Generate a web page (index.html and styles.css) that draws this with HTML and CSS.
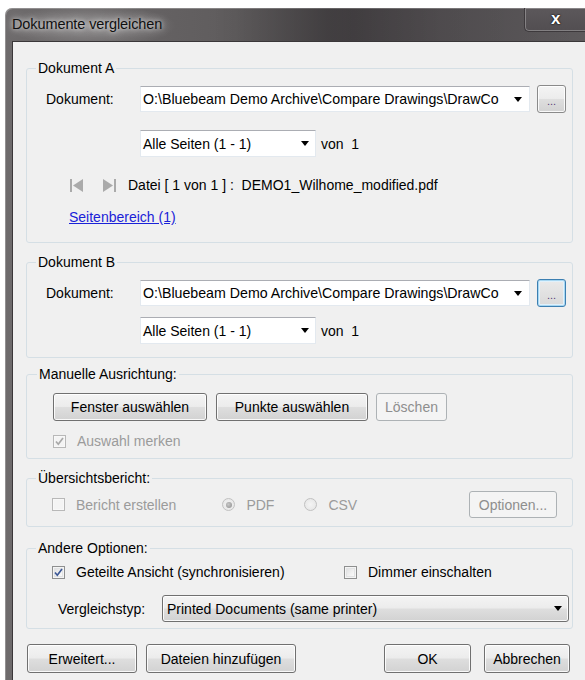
FILE: index.html
```html
<!DOCTYPE html>
<html lang="de">
<head>
<meta charset="utf-8">
<title>Dokumente vergleichen</title>
<link rel="stylesheet" href="styles.css">
</head>
<body>
<div class="window">
  <div class="titlebar">
    <span class="title">Dokumente vergleichen</span>
    <span class="close">x</span>
  </div>
  <div class="client">

    <fieldset class="group group-a">
      <legend>Dokument A</legend>
      <div class="row doc-row">
        <span class="lbl">Dokument:</span>
        <div class="combo combo-path">
          <span class="combo-text">O:\Bluebeam Demo Archive\Compare Drawings\DrawCo</span>
          <span class="arrow"></span>
        </div>
        <span class="btn browse">...</span>
      </div>
      <div class="row page-row">
        <div class="combo combo-pages">
          <span class="combo-text">Alle Seiten (1 - 1)</span>
          <span class="arrow"></span>
        </div>
        <span class="von">von&nbsp; 1</span>
      </div>
      <div class="row nav-row">
        <svg class="nav-icon" width="14" height="13" viewBox="0 0 14 13"><rect x="0" y="0" width="2" height="13"/><polygon points="13,0 3,6.5 13,13"/></svg>
        <svg class="nav-icon nav-last" width="14" height="13" viewBox="0 0 14 13"><polygon points="1,0 11,6.5 1,13"/><rect x="12" y="0" width="2" height="13"/></svg>
        <span class="file-info">Datei [ 1 von 1 ] :&nbsp; DEMO1_Wilhome_modified.pdf</span>
      </div>
      <div class="row link-row">
        <a class="link" href="#">Seitenbereich (1)</a>
      </div>
    </fieldset>

    <fieldset class="group group-b">
      <legend>Dokument B</legend>
      <div class="row doc-row">
        <span class="lbl">Dokument:</span>
        <div class="combo combo-path">
          <span class="combo-text">O:\Bluebeam Demo Archive\Compare Drawings\DrawCo</span>
          <span class="arrow"></span>
        </div>
        <span class="btn browse browse-hot">...</span>
      </div>
      <div class="row page-row page-row-b">
        <div class="combo combo-pages">
          <span class="combo-text">Alle Seiten (1 - 1)</span>
          <span class="arrow"></span>
        </div>
        <span class="von">von&nbsp; 1</span>
      </div>
    </fieldset>

    <fieldset class="group group-manual">
      <legend>Manuelle Ausrichtung:</legend>
      <div class="row btn-row">
        <span class="btn btn-window">Fenster auswählen</span>
        <span class="btn btn-points">Punkte auswählen</span>
        <span class="btn btn-disabled btn-clear">Löschen</span>
      </div>
      <div class="row check-row remember-row">
        <span class="check check-disabled checked">
          <svg width="11" height="11" viewBox="0 0 11 11"><path d="M2 5.5 L4.3 8.2 L9 2"/></svg>
        </span>
        <span class="check-label disabled">Auswahl merken</span>
      </div>
    </fieldset>

    <fieldset class="group group-report">
      <legend>Übersichtsbericht:</legend>
      <div class="row report-row">
        <span class="check check-disabled"></span>
        <span class="check-label disabled">Bericht erstellen</span>
        <span class="radio radio-disabled radio-on radio-pdf"></span>
        <span class="check-label disabled">PDF</span>
        <span class="radio radio-disabled radio-csv"></span>
        <span class="check-label disabled">CSV</span>
        <span class="btn btn-disabled btn-options">Optionen...</span>
      </div>
    </fieldset>

    <fieldset class="group group-other">
      <legend>Andere Optionen:</legend>
      <div class="row check-row other-checks">
        <span class="check checked">
          <svg width="11" height="11" viewBox="0 0 11 11"><path d="M2 5.5 L4.3 8.2 L9 2"/></svg>
        </span>
        <span class="check-label split-label">Geteilte Ansicht (synchronisieren)</span>
        <span class="check"></span>
        <span class="check-label">Dimmer einschalten</span>
      </div>
      <div class="row type-row">
        <span class="lbl type-lbl">Vergleichstyp:</span>
        <div class="select-btn">
          <span class="combo-text">Printed Documents (same printer)</span>
          <span class="arrow"></span>
        </div>
      </div>
    </fieldset>

    <div class="footer">
      <span class="btn btn-advanced">Erweitert...</span>
      <span class="btn btn-add">Dateien hinzufügen</span>
      <span class="footer-spacer"></span>
      <span class="btn btn-ok">OK</span>
      <span class="btn btn-cancel">Abbrechen</span>
    </div>

  </div>
</div>
</body>
</html>
```

FILE: styles.css
```css
html, body {
  margin: 0;
  padding: 0;
  background: #ffffff;
  overflow: hidden;
  height: 680px;
}

body {
  font-family: "Liberation Sans", Arial, sans-serif;
  font-size: 14px;
  color: #000;
}

/* ---------- window frame ---------- */
.window {
  margin: 8px 0 0 5px;
  width: 580px;
  height: 672px;
  border-radius: 7px 0 0 0;
  background: linear-gradient(90deg, #6e6b6c 0%, #5f5c5d 40%, #4c484b 60%, #5d5a5c 100%);
  box-shadow: inset 1px 1px 0 rgba(255, 255, 255, 0.25);
  padding-left: 7px;
  box-sizing: border-box;
  display: flex;
  flex-direction: column;
  overflow: hidden;
}

.titlebar {
  height: 33px;
  flex: none;
  display: flex;
  align-items: flex-start;
  position: relative;
  background:
    radial-gradient(ellipse 120px 30px at 80px 18px, rgba(255, 255, 255, 0.28), rgba(255, 255, 255, 0) 70%),
    linear-gradient(90deg, rgba(0,0,0,0) 0%, rgba(0,0,0,0) 35%, rgba(0,0,0,0.18) 55%, rgba(0,0,0,0.05) 75%, rgba(0,0,0,0) 100%);
}

.title {
  margin-top: 8px;
  font-size: 14.5px;
  color: #101010;
  text-shadow: 0 0 8px rgba(255, 255, 255, 0.85), 0 0 4px rgba(255, 255, 255, 0.6);
  letter-spacing: -0.1px;
}

.close {
  position: absolute;
  top: 0;
  left: 512px;
  width: 70px;
  height: 23px;
  border: 1px solid #3d393c;
  border-top: none;
  border-right: none;
  border-radius: 0 0 0 5px;
  box-shadow: inset 0 0 0 1px rgba(255, 255, 255, 0.28);
  background: linear-gradient(#5c585b, #524e51);
  color: #fff;
  font-weight: bold;
  font-size: 17px;
  line-height: 21px;
  text-indent: 26px;
  text-shadow: 0 0 2px #000, 0 0 1px #000;
}

/* ---------- client area ---------- */
.client {
  flex: 1;
  background: #f0f0f0;
  border-top: 1px solid #3a3739;
  border-left: 1px solid #3a3739;
  padding: 18px 0 0 13px;
}

/* ---------- group boxes ---------- */
.group {
  width: 547px;
  box-sizing: border-box;
  margin: 0;
  padding: 0 0 0 19px;
  border: 1px solid #d5dfe5;
  border-radius: 3px;
  min-inline-size: 0;
}

.group legend {
  margin-left: -10px;
  padding: 0 2px;
  line-height: 16px;
  height: 16px;
}

.group-a { padding-top: 9px; padding-bottom: 17px; }
.group-b { margin-top: 11px; padding-top: 9px; padding-bottom: 13px; }
.group-manual { margin-top: 8px; padding-top: 11px; padding-bottom: 9px; padding-left: 26px; }
.group-report { margin-top: 11px; padding-top: 5px; padding-bottom: 8px; padding-left: 25px; }
.group-other { margin-top: 13px; padding-top: 8px; padding-bottom: 6px; padding-left: 25px; }

.group-manual legend,
.group-report legend,
.group-other legend { margin-left: -16px; }

.row {
  display: flex;
  align-items: center;
}

.lbl {
  width: 94px;
  flex: none;
  line-height: 16px;
}

/* ---------- combo boxes ---------- */
.combo {
  height: 26px;
  box-sizing: border-box;
  background: #fff;
  border: 1px solid #e3e9ef;
  border-top-color: #abadb3;
  display: flex;
  align-items: center;
  overflow: hidden;
}

.combo-text {
  flex: 1;
  min-width: 0;
  white-space: nowrap;
  overflow: hidden;
  padding-left: 2px;
}

.arrow {
  flex: none;
  width: 0;
  height: 0;
  border-left: 4.5px solid transparent;
  border-right: 4.5px solid transparent;
  border-top: 5px solid #000;
  margin: 0 7px 0 6px;
}

.combo-path { width: 390px; }
.combo-path .combo-text { font-size: 14.2px; }

.doc-row { height: 28px; }

.page-row { margin-top: 17px; padding-left: 94px; }
.page-row-b { margin-top: 10px; }
.combo-pages { width: 176px; height: 27px; }
.combo-pages .arrow { margin-right: 6px; }

.von { margin-left: 5px; }

/* ---------- buttons ---------- */
.btn {
  height: 28px;
  box-sizing: border-box;
  display: inline-flex;
  align-items: center;
  justify-content: center;
  flex: none;
  border: 1px solid #707070;
  border-radius: 3px;
  background: linear-gradient(#f4f4f4 0%, #ececec 48%, #dedede 52%, #d2d2d2 100%);
  box-shadow: inset 0 0 0 1px rgba(255, 255, 255, 0.85);
  color: #000;
  white-space: nowrap;
}

.btn-disabled {
  border-color: #adb2b5;
  background: #f4f4f4;
  box-shadow: none;
  color: #8e8e8e;
}

.browse {
  width: 29px;
  margin-left: 7px;
  font-size: 11px;
  align-items: flex-end;
  padding-bottom: 5px;
  color: #5b3f7a;
  border-color: #8a8a8a;
}

.browse-hot {
  border-color: #3c7fb1;
  box-shadow: inset 0 0 0 1px #a7d7f2, inset 0 0 0 2px #e1f1fb;
  background: linear-gradient(#eaeaea, #d9d9d9);
}

/* ---------- navigation row ---------- */
.nav-row {
  margin-top: 20px;
  height: 16px;
  padding-left: 24px;
}

.nav-icon { fill: #aaaaaa; flex: none; }
.nav-last { margin-left: 18px; }
.file-info { margin-left: 12px; white-space: nowrap; }

.link-row {
  margin-top: 16px;
  height: 16px;
  padding-left: 23px;
}

.link {
  color: #1a22d8;
  text-decoration: underline;
}

/* ---------- manual alignment ---------- */
.btn-window { width: 154px; }
.btn-points { width: 152px; margin-left: 9px; }
.btn-clear { width: 71px; margin-left: 8px; }

.check-row { height: 16px; }
.remember-row { margin-top: 12px; }

.check {
  width: 13px;
  height: 13px;
  box-sizing: border-box;
  flex: none;
  border: 1px solid #8e8f8f;
  background: linear-gradient(135deg, #d9dadb 0%, #f3f3f3 60%, #ffffff 100%);
  box-shadow: inset 0 0 0 1px #f4f4f4, inset 0 0 0 2px #e2e3e4;
  display: flex;
  align-items: center;
  justify-content: center;
}

.check svg { fill: none; stroke: #3d5896; stroke-width: 1.7; }

.check-disabled {
  border-color: #b8b8b8;
  background: #f4f4f4;
  box-shadow: inset 0 0 0 1px #f8f8f8;
}

.check-disabled svg { stroke: #a8a8a8; }

.check-label { margin-left: 11px; white-space: nowrap; }
.disabled { color: #9b9b9b; }

/* ---------- report ---------- */
.report-row { height: 27px; }

.radio {
  width: 13px;
  height: 13px;
  box-sizing: border-box;
  border-radius: 50%;
  flex: none;
  border: 1px solid #c1c1c1;
  background: radial-gradient(circle, #f4f4f4 0%, #e4e4e4 100%);
  position: relative;
}

.radio-on::after {
  content: "";
  position: absolute;
  left: 2.5px;
  top: 2.5px;
  width: 6px;
  height: 6px;
  border-radius: 50%;
  background: radial-gradient(circle at 40% 40%, #c8c8c8, #8c8c8c);
}

.radio-pdf { margin-left: 46px; }
.radio-csv { margin-left: 30px; }
.report-row .check-label { margin-left: 11px; }
.btn-options { width: 88px; height: 27px; margin-left: auto; margin-right: 15px; }

/* ---------- other options ---------- */
.other-checks { height: 16px; }
.split-label { width: 268px; }

.type-row { margin-top: 15px; padding-left: 6px; }
.type-lbl { width: 104px; }

.select-btn {
  width: 407px;
  height: 27px;
  box-sizing: border-box;
  display: flex;
  align-items: center;
  border: 1px solid #707070;
  border-radius: 3px;
  background: linear-gradient(#f4f4f4 0%, #ececec 48%, #dedede 52%, #d2d2d2 100%);
  box-shadow: inset 0 0 0 1px rgba(255, 255, 255, 0.85);
}

.select-btn .combo-text { padding-left: 4px; }
.select-btn .arrow { margin-right: 6px; }

/* ---------- footer ---------- */
.footer {
  margin-top: 15px;
  width: 543px;
  display: flex;
  margin-left: 1px;
}

.footer .btn { height: 29px; }
.btn-advanced { width: 110px; }
.btn-add { width: 150px; margin-left: 9px; }
.footer-spacer { flex: 1; }
.btn-ok { width: 87px; }
.btn-cancel { width: 86px; margin-left: 13px; }
```
